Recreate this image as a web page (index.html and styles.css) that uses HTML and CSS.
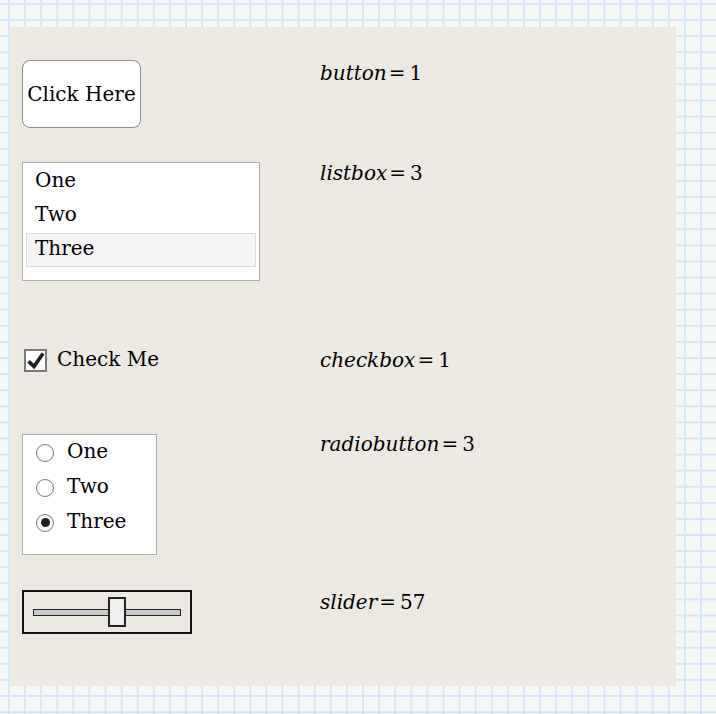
FILE: index.html
```html
<!DOCTYPE html>
<html lang="en">
<head>
    <meta charset="UTF-8">
    <meta name="viewport" content="width=device-width, initial-scale=1.0">
    <title>Form Controls</title>
    <link rel="stylesheet" href="styles.css">
</head>
<body>
    <div class="sheet">

        <div class="region region-button">
            <div class="control">
                <button class="push-button">Click Here</button>
            </div>
            <div class="result"><span class="var">button</span><span class="eq">=</span><span class="num">1</span></div>
        </div>

        <div class="region region-list">
            <div class="control">
                <ul class="listbox">
                    <li>One</li>
                    <li>Two</li>
                    <li class="selected">Three</li>
                </ul>
            </div>
            <div class="result"><span class="var">listbox</span><span class="eq">=</span><span class="num">3</span></div>
        </div>

        <div class="region region-check">
            <div class="control">
                <label class="checkbox">
                    <span class="check-box">
                        <svg width="19" height="19" viewBox="0 0 19 19">
                            <path d="M2.6 10.4 L8 15.6 L17 2.6" fill="none" stroke="#1e1e1e" stroke-width="3.6" stroke-linejoin="miter"/>
                        </svg>
                    </span>
                    <span class="check-label">Check Me</span>
                </label>
            </div>
            <div class="result"><span class="var">checkbox</span><span class="eq">=</span><span class="num">1</span></div>
        </div>

        <div class="region region-radio">
            <div class="control">
                <div class="radio-group">
                    <div class="radio"><span class="dot"></span><span class="radio-label">One</span></div>
                    <div class="radio"><span class="dot"></span><span class="radio-label">Two</span></div>
                    <div class="radio checked"><span class="dot"></span><span class="radio-label">Three</span></div>
                </div>
            </div>
            <div class="result"><span class="var">radiobutton</span><span class="eq">=</span><span class="num">3</span></div>
        </div>

        <div class="region region-slider">
            <div class="control">
                <div class="slider">
                    <div class="track">
                        <div class="thumb" style="left: calc(57% - 9px);"></div>
                    </div>
                </div>
            </div>
            <div class="result"><span class="var">slider</span><span class="eq">=</span><span class="num">57</span></div>
        </div>

    </div>
</body>
</html>
```

FILE: styles.css
```css
* {
    margin: 0;
    padding: 0;
    box-sizing: border-box;
}

html {
    min-height: 100%;
    background-color: #f4f7f4;
    background-image:
        linear-gradient(to right, #d3e6f7 2px, transparent 2px),
        linear-gradient(to bottom, #d3e6f7 2px, transparent 2px);
    background-size: 16.1px 16.1px;
    background-position: 8px 3px;
}

body {
    font-family: "DejaVu Serif", serif;
    font-size: 20px;
    color: #000;
    padding: 27px 0 0 10px;
}

/* worksheet area */
.sheet {
    width: 666px;
    height: 659px;
    background-color: #ece9e2;
    padding: 33px 0 0 12px;
}

.region {
    display: grid;
    grid-template-columns: 298px 1fr;
    align-items: start;
}

.region-list { margin-top: 34px; }
.region-check { margin-top: 68px; }
.region-radio { margin-top: 62px; }
.region-slider { margin-top: 35px; }

/* evaluated variable on the right */
.result {
    font-size: 20px;
    line-height: 20px;
    margin-top: 3px;
    white-space: nowrap;
}

.result .var {
    font-style: italic;
}

.result .eq {
    margin: 0 4px 0 2px;
}

.region-list .result,
.region-check .result { margin-top: 1px; }
.region-radio .result { margin-top: 0; }
.region-slider .result { margin-top: 2px; }

/* push button */
.push-button {
    width: 119px;
    height: 68px;
    background: #fff;
    border: 1px solid #8c8c8c;
    border-radius: 8px;
    font-family: "DejaVu Serif", serif;
    font-size: 20px;
    color: #000;
    padding: 0 0 1px 0;
}

/* list box */
.listbox {
    list-style: none;
    width: 238px;
    height: 119px;
    background: #fff;
    border: 1px solid #adadad;
    padding: 2px 3px 0 3px;
}

.listbox li {
    height: 34px;
    line-height: 28px;
    padding: 0 0 4px 8px;
    border: 1px solid transparent;
}

.listbox li.selected {
    background: #f4f4f4;
    border-color: #d9d9d9;
}

/* check box */
.checkbox {
    display: flex;
    align-items: center;
    gap: 10px;
    height: 23px;
    margin-left: 2px;
}

.check-box {
    width: 23px;
    height: 23px;
    background: #fff;
    border: 2px solid #7a7a7a;
    display: flex;
    align-items: center;
    justify-content: center;
}

.check-label {
    padding-bottom: 3px;
}

/* radio buttons */
.radio-group {
    width: 135px;
    height: 121px;
    background: #fff;
    border: 1px solid #adadad;
}

.radio {
    display: flex;
    align-items: center;
    height: 35px;
    padding-left: 13px;
}

.radio .dot {
    width: 18px;
    height: 18px;
    border: 1.5px solid #767676;
    border-radius: 50%;
    background: #fff;
    display: flex;
    align-items: center;
    justify-content: center;
    margin-right: 13px;
}

.radio.checked .dot::after {
    content: "";
    width: 9px;
    height: 9px;
    border-radius: 50%;
    background: #1e1e1e;
}

.radio-label {
    padding-bottom: 3px;
}

/* slider */
.slider {
    width: 170px;
    height: 44px;
    border: 2px solid #141414;
    display: flex;
    align-items: center;
    padding: 0 9px;
}

.track {
    position: relative;
    width: 149px;
    height: 7px;
    background: #c9c9c9;
    border: 1.5px solid #222;
}

.thumb {
    position: absolute;
    top: -13px;
    width: 18px;
    height: 30px;
    background: #efefef;
    border: 2px solid #222;
}
```
